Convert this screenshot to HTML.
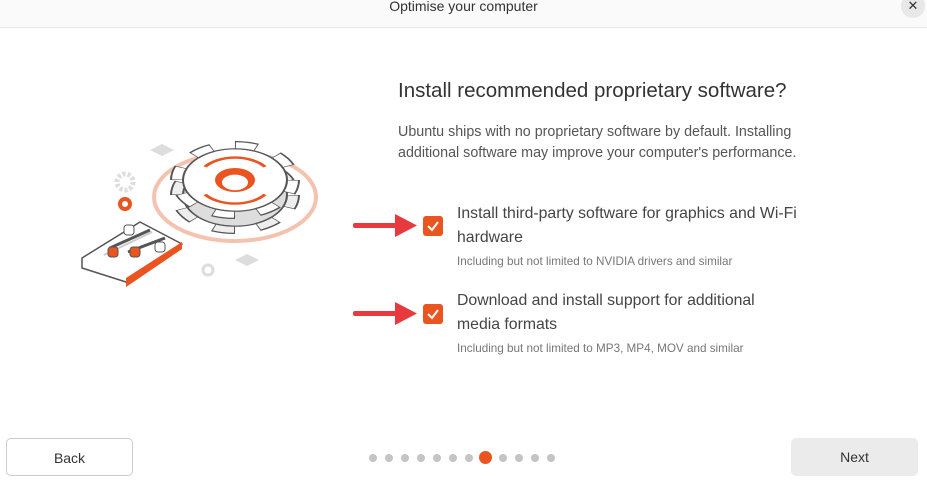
<!DOCTYPE html>
<html><head><meta charset="utf-8"><style>
body{margin:0;width:927px;height:486px;background:#fff;font-family:"Liberation Sans",sans-serif;position:relative;overflow:hidden;color:#333}
.hdr{position:absolute;left:0;top:0;width:927px;height:27px;border-bottom:1px solid #e6e6e6;background:#fafafa}
.ttl{position:absolute;top:-2px;width:100%;text-align:center;font-size:14px;color:#333}
.x{position:absolute;right:2px;top:-6px;width:24px;height:24px;border-radius:12px;background:#e8e8e8;text-align:center;font-size:13px;line-height:24px}
.t{position:absolute;left:398px;top:79px;font-size:20.5px;color:#333}
.p{position:absolute;left:398px;top:122px;font-size:14.3px;line-height:21px;color:#555}
.cb{position:absolute;left:423px;width:20px;height:20px;border-radius:3px;background:#e95420}
.l{position:absolute;left:457px;font-size:15.8px;line-height:24px;color:#444}
.s{position:absolute;left:457px;font-size:11.7px;color:#777}
.btn{position:absolute;top:438px;height:38px;border-radius:5px;font-size:14px;text-align:center;line-height:38px;box-sizing:border-box}
.dot{position:absolute;top:454px;width:8px;height:8px;border-radius:4px;background:#c4c4c4}
</style></head><body>
<div class="hdr"><div class="ttl">Optimise your computer</div><div class="x">✕</div></div>
<svg style="position:absolute;left:70px;top:120px" width="280" height="180" viewBox="0 0 280 180">
<ellipse cx="165" cy="77" rx="81" ry="44" fill="none" stroke="#f4c2ae" stroke-width="4"/>
<g transform="translate(165,75) scale(1,0.6)">
<circle r="52" fill="#ddd" stroke="#555" stroke-width="2"/>
<circle r="58" fill="none" stroke="#555" stroke-width="14" stroke-dasharray="22 23.5"/>
<circle r="58" fill="none" stroke="#eee" stroke-width="10" stroke-dasharray="20 25.5" stroke-dashoffset="-1"/>
</g>
<g transform="translate(165,60) scale(1,0.6)">
<circle r="52" fill="#fff" stroke="#555" stroke-width="2"/>
<circle r="58" fill="none" stroke="#555" stroke-width="14" stroke-dasharray="22 23.5"/>
<circle r="58" fill="none" stroke="#fff" stroke-width="10" stroke-dasharray="20 25.5" stroke-dashoffset="-1"/>
<circle r="50" fill="#fff"/>
<circle r="20" fill="#e95420"/>
<circle r="13" cy="4" fill="#fff"/>
<path d="M-30,-22 A37,37 0 0 1 30,-22" stroke="#e95420" stroke-width="4" fill="none"/>
<path d="M30,24 A37,37 0 0 1 -30,24" stroke="#e95420" stroke-width="4" fill="none"/>
</g>
<polygon points="80,30 92,24 104,30 92,36" fill="#ddd"/>
<polygon points="165,140 177,134 189,140 177,146" fill="#ddd"/>
<circle cx="55" cy="62" r="8" fill="none" stroke="#ddd" stroke-width="5" stroke-dasharray="3 2"/>
<circle cx="55" cy="84" r="5" fill="none" stroke="#e95420" stroke-width="4"/>
<circle cx="138" cy="150" r="5" fill="none" stroke="#ddd" stroke-width="3"/>
<polygon points="12,138 70,102 112,124 56,162 12,148" fill="#fff" stroke="#555" stroke-width="1.5" stroke-linejoin="round"/>
<polygon points="56,158 112,122 112,129 56,167" fill="#e95420"/>
<line x1="34" y1="135" x2="82" y2="112" stroke="#ccc" stroke-width="2"/>
<line x1="40" y1="128" x2="80" y2="110" stroke="#555" stroke-width="3"/>
<line x1="58" y1="132" x2="95" y2="118" stroke="#555" stroke-width="3"/>
<rect x="54" y="105" width="10" height="10" rx="3" fill="#fff" stroke="#555"/>
<rect x="38" y="127" width="10" height="10" rx="3" fill="#e95420" stroke="#555"/>
<rect x="60" y="127" width="10" height="10" rx="3" fill="#e95420" stroke="#555"/>
<rect x="85" y="122" width="10" height="10" rx="3" fill="#fff" stroke="#555"/>
</svg>
<div class="t">Install recommended proprietary software?</div>
<div class="p">Ubuntu ships with no proprietary software by default. Installing<br>additional software may improve your computer's performance.</div>
<svg style="position:absolute;left:350px;top:210px" width="70" height="120"><g fill="#e8393e"><rect x="3" y="13" width="50" height="5" rx="2"/><polygon points="45,4 67,15.5 45,27"/><rect x="3" y="101" width="50" height="5" rx="2"/><polygon points="45,92 67,103.5 45,115"/></g></svg>
<div class="cb" style="top:216px"><svg width="20" height="20"><path d="M5 10 L9 14 L15 6" stroke="#fff" stroke-width="2" fill="none"/></svg></div>
<div class="cb" style="top:304px"><svg width="20" height="20"><path d="M5 10 L9 14 L15 6" stroke="#fff" stroke-width="2" fill="none"/></svg></div>
<div class="l" style="top:202px">Install third-party software for graphics and Wi-Fi<br>hardware</div>
<div class="s" style="top:255px">Including but not limited to NVIDIA drivers and similar</div>
<div class="l" style="top:289px">Download and install support for additional<br>media formats</div>
<div class="s" style="top:342px">Including but not limited to MP3, MP4, MOV and similar</div>
<div class="btn" style="left:6px;width:127px;border:1px solid #ccc;background:#fff">Back</div>
<div class="btn" style="left:791px;width:127px;background:#ebebeb">Next</div>
<div class="dot" style="left:369px"></div><div class="dot" style="left:385px"></div><div class="dot" style="left:401px"></div><div class="dot" style="left:417px"></div><div class="dot" style="left:433px"></div><div class="dot" style="left:449px"></div><div class="dot" style="left:465px"></div>
<div class="dot" style="left:479px;top:451px;width:13px;height:13px;border-radius:7px;background:#e95420"></div>
<div class="dot" style="left:499px"></div><div class="dot" style="left:515px"></div><div class="dot" style="left:531px"></div><div class="dot" style="left:547px"></div>
</body></html>
